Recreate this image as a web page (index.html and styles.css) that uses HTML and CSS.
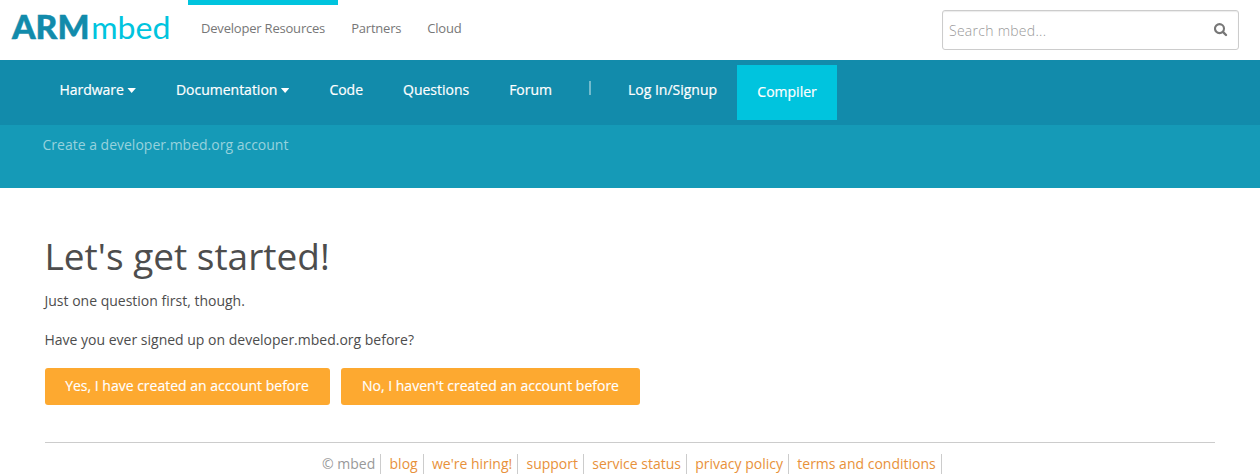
FILE: index.html
```html
<!DOCTYPE html>
<html lang="en">
<head>
<meta charset="utf-8">
<title>Create an account | mbed</title>
<link rel="stylesheet" href="styles.css">
</head>
<body>
<header class="top">
  <svg class="logo" width="160" height="32" viewBox="0 0 160 32" role="img" aria-label="ARM mbed">
    <text class="logo-arm" x="0" y="28.6" textLength="77.5" lengthAdjust="spacingAndGlyphs">ARM</text>
    <text class="logo-mbed" x="79.2" y="28.6" textLength="79.3" lengthAdjust="spacingAndGlyphs">mbed</text>
  </svg>
  <nav class="sites">
    <a class="site active">Developer Resources</a>
    <a class="site">Partners</a>
    <a class="site">Cloud</a>
  </nav>
  <div class="search">
    <span>Search mbed...</span>
    <svg width="14" height="14" viewBox="0 0 14 14"><circle cx="5.5" cy="5.6" r="4.5" fill="none" stroke="#777" stroke-width="2.1"/><path d="M8.9 8.9L12 12" stroke="#777" stroke-width="2.4" stroke-linecap="round"/></svg>
  </div>
</header>
<nav class="main-nav">
  <a class="item">Hardware<i class="caret"></i></a>
  <a class="item">Documentation<i class="caret"></i></a>
  <a class="item">Code</a>
  <a class="item">Questions</a>
  <a class="item">Forum</a>
  <span class="divider"></span>
  <a class="item">Log In/Signup</a>
  <a class="compiler">Compiler</a>
</nav>
<div class="crumb">Create a developer.mbed.org account</div>
<main class="content">
  <h1>Let's get started!</h1>
  <p>Just one question first, though.</p>
  <p>Have you ever signed up on developer.mbed.org before?</p>
  <div class="buttons">
    <a class="btn yes">Yes, I have created an account before</a>
    <a class="btn no">No, I haven't created an account before</a>
  </div>
</main>
<footer class="footer">
  <span class="link copy">© mbed</span>
  <a class="link">blog</a>
  <a class="link">we're hiring!</a>
  <a class="link">support</a>
  <a class="link">service status</a>
  <a class="link">privacy policy</a>
  <a class="link">terms and conditions</a>
</footer>
</body>
</html>
```
FILE: styles.css
```css
* { box-sizing: border-box; }
body {
  margin: 0;
  height: 474px;
  overflow: hidden;
  background: #fff;
  color: #4d4d4d;
  font: 14px/20px "Open Sans", "Noto Sans", sans-serif;
}
.top { display: flex; height: 60px; padding-left: 12px; }
.logo { margin-top: 10px; overflow: visible; }
.logo-arm { font: 900 32.5px Lato, sans-serif; fill: #128bab; stroke: #128bab; stroke-width: .5px; }
.logo-mbed { font: 400 31.5px Lato, sans-serif; fill: #00c4de; }
.sites { display: flex; margin-left: 16px; }
.site {
  height: 60px;
  padding: 13px 13px 0;
  border-top: 5px solid transparent;
  color: #777;
  font-size: 13px;
  letter-spacing: -.2px;
}
.active { border-color: #00c4de; }
.search {
  display: flex;
  align-items: center;
  justify-content: space-between;
  width: 297px;
  height: 40px;
  margin: 10px 21px 0 auto;
  padding: 1px 10px 0 6px;
  border: 1px solid #ccc;
  border-radius: 3px;
  box-shadow: inset 0 1px 1px rgba(0,0,0,.08);
  color: #999;
  font-weight: 300;
  letter-spacing: .27px;
}
.search svg { margin-top: -1px; }
.main-nav {
  display: flex;
  height: 65px;
  padding: 5px 0 0 39.4px;
  background: #128bab;
  color: #fff;
  -webkit-text-stroke: .2px #fff;
}
.item { display: flex; padding: 15px 20px 0; letter-spacing: -.01px; }
.caret {
  margin: 8px 0 0 3.5px;
  width: 8.5px;
  height: 5px;
  background: #fff;
  clip-path: polygon(0 0, 100% 0, 50% 100%);
}
.divider { width: 2px; height: 14px; margin: 16px 17px 0; background: #72bbcd; }
.compiler { width: 100px; height: 55px; padding-top: 17px; background: #00c4de; text-align: center; }
.crumb { height: 63px; padding: 10px 42.5px; background: #159ab7; color: #97d2dd; }
.content { margin: 0 45px; height: 255px; padding-top: 48px; border-bottom: 1px solid #ccc; }
h1 { margin: 0 0 15px -.5px; font-size: 37px; line-height: 40px; font-weight: 400; }
p { margin: 0 0 19px -.5px; }
.buttons { display: flex; gap: 11px; margin-top: -1px; }
.btn {
  height: 37px;
  padding-top: 8px;
  border-radius: 3px;
  background: #fda930;
  color: #fff;
  text-align: center;
  -webkit-text-stroke: .15px #fff;
}
.yes { width: 285px; padding-right: 1px; }
.no { width: 299px; }
.footer { display: flex; padding: 11px 0 0 322px; }
.link { height: 20px; padding-right: 5.2px; margin-right: 8.1px; border-right: 1px solid #ccc; color: #e8913a; }
.copy { color: #999; }
```
